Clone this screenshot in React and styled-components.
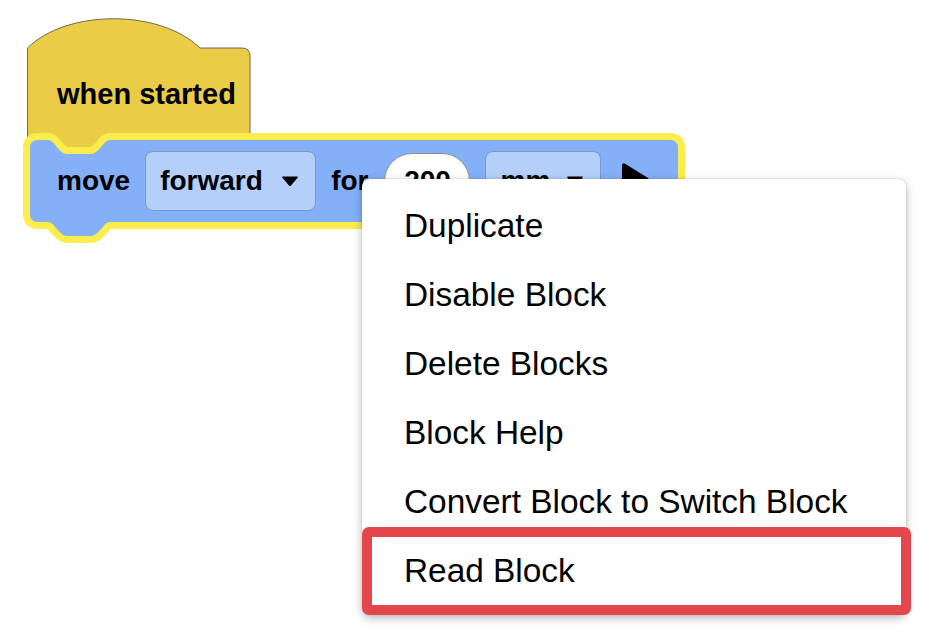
import React from "react";
import styled, { createGlobalStyle } from "styled-components";

const Global = createGlobalStyle`
  html, body { margin: 0; padding: 0; background: #ffffff; }
  body { font-family: "Liberation Sans", Arial, sans-serif; }
`;

const Workspace = styled.div`
  position: relative;
  width: 940px;
  height: 642px;
  overflow: hidden;
  background: #ffffff;
`;

const BlockShell = styled.div`
  position: absolute;
  left: ${(p) => p.$x}px;
  top: ${(p) => p.$y}px;
  width: ${(p) => p.$w}px;
  height: ${(p) => p.$h}px;
`;

const Shape = styled.svg`
  position: absolute;
  inset: 0;
  overflow: visible;
`;

const HatContent = styled.div`
  position: relative;
  display: flex;
  align-items: center;
  height: 92px;
  margin-top: 29px;
  padding-left: 30px;
`;

const BlockRow = styled.div`
  position: relative;
  display: flex;
  align-items: center;
  gap: 15px;
  height: 82px;
  margin-top: 7px;
  padding-left: 34px;
`;

const Label = styled.span`
  font-family: "Liberation Sans", Arial, sans-serif;
  font-weight: 700;
  font-size: ${(p) => p.$size || 28}px;
  color: #000;
  line-height: 1;
  white-space: nowrap;
`;

const Dropdown = styled.div`
  display: flex;
  align-items: center;
  gap: 14px;
  box-sizing: border-box;
  width: ${(p) => p.$w}px;
  height: 60px;
  padding: 0 16px 0 14px;
  background: #b4d0fa;
  border: 1.5px solid #7b98c8;
  border-radius: 8px;
`;

const NumberField = styled.div`
  display: flex;
  align-items: center;
  justify-content: center;
  box-sizing: border-box;
  width: 86px;
  height: 56px;
  margin-left: 1px;
  background: #ffffff;
  border: 1.5px solid #8c8c8c;
  border-radius: 28px;
`;

const Arrow = styled.svg`
  flex: none;
  margin-left: auto;
`;

const PlayIcon = styled.svg`
  flex: none;
  margin-left: 3px;
`;

const Menu = styled.div`
  position: absolute;
  left: 362px;
  top: 179px;
  width: 544px;
  box-sizing: border-box;
  padding: 12px 0 10px;
  background: #ffffff;
  border-radius: 8px;
  box-shadow: 0 3px 10px rgba(0, 0, 0, 0.28), 0 0 2px rgba(0, 0, 0, 0.15);
`;

const MenuItem = styled.div`
  position: relative;
  display: flex;
  align-items: center;
  height: 69px;
  padding-left: 42px;
  font-family: "Liberation Sans", Arial, sans-serif;
  font-size: 33.4px;
  color: #000;
  white-space: nowrap;

  ${(p) =>
    p.$marked &&
    `
    &::after {
      content: "";
      position: absolute;
      left: 0;
      right: -5px;
      top: -9px;
      bottom: -10px;
      border: 10px solid #e3474c;
      border-radius: 7px;
      pointer-events: none;
    }
  `}
`;

const DropArrow = () => (
  <Arrow width="18" height="12" viewBox="0 0 18 12">
    <path d="M2 1.5 L16 1.5 Q17.5 1.5 16.6 2.8 L10 10.5 Q9 11.6 8 10.5 L1.4 2.8 Q0.5 1.5 2 1.5 Z" fill="#000" />
  </Arrow>
);

const items = [
  "Duplicate",
  "Disable Block",
  "Delete Blocks",
  "Block Help",
  "Convert Block to Switch Block",
  "Read Block",
];

const hatPath =
  "M0.5,29 C40,-10 133,-10 173,29 L215,29 Q223,29 223,37 L223,121 L87,121 C80,121 77,135 67,135 L45,135 C35,135 32,121 25,121 L0.5,121 Z";

const movePath =
  "M7,15 Q7,7 15,7 L25,7 C32,7 35,21 45,21 L67,21 C77,21 80,7 87,7 L647,7 Q655,7 655,15 L655,81 Q655,89 647,89 L87,89 C80,89 77,103 67,103 L45,103 C35,103 32,89 25,89 L15,89 Q7,89 7,81 Z";

export default function App() {
  return (
    <>
      <Global />
      <Workspace>
        <BlockShell $x={27} $y={19} $w={224} $h={136}>
          <Shape width="224" height="136" viewBox="0 0 224 136">
            <path d={hatPath} fill="#ebcc47" stroke="#6e6a5c" strokeWidth="1" />
          </Shape>
          <HatContent>
            <Label $size={29}>when started</Label>
          </HatContent>
        </BlockShell>

        <BlockShell $x={23} $y={133} $w={662} $h={110}>
          <Shape width="662" height="110" viewBox="0 0 662 110">
            <path d={movePath} fill="#fcec4c" stroke="#fcec4c" strokeWidth="14" strokeLinejoin="round" />
            <path d={movePath} fill="#84b0f7" />
          </Shape>
          <BlockRow>
            <Label>move</Label>
            <Dropdown $w={171}>
              <Label>forward</Label>
              <DropArrow />
            </Dropdown>
            <Label>for</Label>
            <NumberField>
              <Label>200</Label>
            </NumberField>
            <Dropdown $w={116}>
              <Label>mm</Label>
              <DropArrow />
            </Dropdown>
            <PlayIcon width="32" height="40" viewBox="0 0 32 40">
              <path d="M3 5 Q3 1 6.5 3 L29 17 Q32 20 29 23 L6.5 37 Q3 39 3 35 Z" fill="#000" />
            </PlayIcon>
          </BlockRow>
        </BlockShell>

        <Menu>
          {items.map((t, i) => (
            <MenuItem key={t} $marked={i === items.length - 1}>
              {t}
            </MenuItem>
          ))}
        </Menu>
      </Workspace>
    </>
  );
}
